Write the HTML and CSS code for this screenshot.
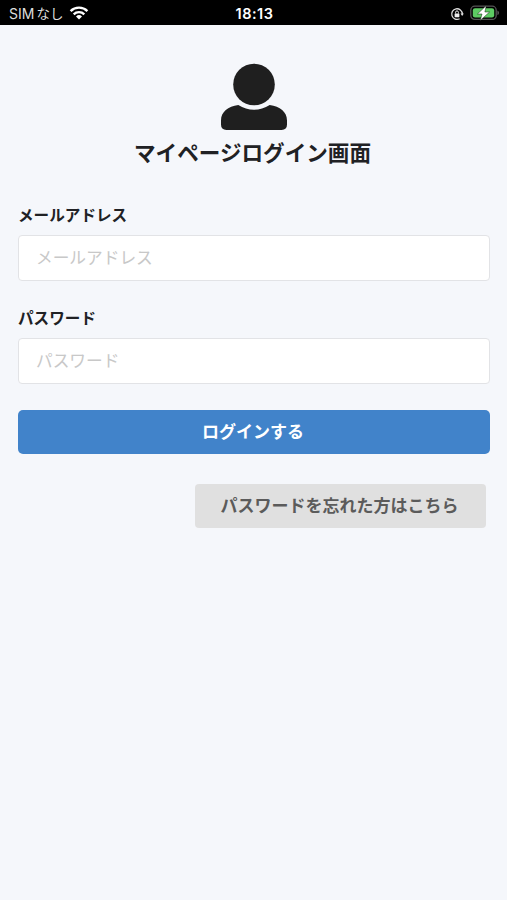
FILE: index.html
```html
<!DOCTYPE html>
<html lang="ja">
<head>
<meta charset="utf-8">
<meta name="viewport" content="width=device-width, initial-scale=1">
<title>マイページログイン画面</title>
<link rel="stylesheet" href="styles.css">
</head>
<body>
<header class="status">
  <div class="status-left">
    <span class="carrier">SIM<span class="carrier-kana">なし</span></span>
    <svg class="wifi" viewBox="0 0 20 15" width="20" height="15" aria-hidden="true">
      <g fill="none" stroke="#fff" stroke-width="2.4">
        <path d="M1.6 6.1a12 12 0 0 1 16.8 0"/>
        <path d="M4.7 9.3a7.6 7.6 0 0 1 10.6 0"/>
      </g>
      <path fill="#fff" d="M10 14.6l-3-3.1a4.3 4.3 0 0 1 6 0z"/>
    </svg>
  </div>
  <span class="clock">18:13</span>
  <div class="status-right">
    <svg viewBox="0 0 14 14" width="14" height="14" aria-hidden="true">
      <path d="M9.6 11.7A5.3 5.3 0 1 1 12.3 7" fill="none" stroke="#ddd" stroke-width="1.3"/>
      <path d="M10.5 6.5h3.3l-1.6 2.4z" fill="#ddd"/>
      <rect x="4.6" y="6.4" width="4.8" height="3.8" rx=".6" fill="#eee"/>
      <path d="M5.6 6.5V5.3a1.4 1.4 0 0 1 2.8 0v1.2" fill="none" stroke="#eee" stroke-width="1"/>
    </svg>
    <svg class="battery" viewBox="0 0 30 16" width="30" height="16" aria-hidden="true">
      <rect x=".8" y="1.2" width="25.4" height="13.2" rx="4" fill="none" stroke="#555" stroke-width="1.3"/>
      <rect x="2.8" y="3.2" width="21.4" height="9.2" rx="2.2" fill="#5dcb63"/>
      <path d="M27.4 5.5c2.2.8 2.2 3.8 0 4.6z" fill="#555"/>
      <path d="M16.3.6L7.4 9h4.6l-1.8 6.4L19.6 7h-4.7z" fill="#fff" stroke="#10240f" stroke-width=".5"/>
    </svg>
  </div>
</header>
<main class="page">
  <svg class="avatar" viewBox="0 0 68 68" width="68" height="68" aria-hidden="true">
    <circle cx="34" cy="21.5" r="20.8" fill="#1f1f1f"/>
    <path fill="#1f1f1f" d="M18.3 42.1C8 43.2 1 49.2 1 57.4v4.2Q1 67 6.4 67h55.2Q67 67 67 61.6v-4.2c0-8.2-7-14.2-17.3-15.3C40 48.4 28 48.4 18.3 42.1z"/>
  </svg>
  <h1 class="title">マイページログイン画面</h1>
  <form class="form">
    <label class="label" for="mail">メールアドレス</label>
    <input class="field" id="mail" type="email" placeholder="メールアドレス">
    <label class="label" for="pass">パスワード</label>
    <input class="field" id="pass" type="password" placeholder="パスワード">
    <button class="login" type="button">ログインする</button>
    <button class="forgot" type="button">パスワードを忘れた方はこちら</button>
  </form>
</main>
</body>
</html>
```
FILE: styles.css
```css
* {
  box-sizing: border-box;
}

body {
  margin: 0;
  min-height: 900px;
  background: #f5f7fb;
  color: #202124;
  font-family: Inter, "Noto Sans CJK JP", sans-serif;
}

.status {
  display: grid;
  grid-template-columns: 1fr auto 1fr;
  align-items: center;
  height: 25px;
  padding: 2px 7px 0 9px;
  background: #000;
  color: #fff;
}

.status-left,
.status-right {
  display: flex;
  align-items: center;
}

.status-left {
  gap: 6px;
}

.status-right {
  justify-content: flex-end;
  gap: 6px;
}

.carrier {
  color: #ddd;
  font-size: 14px;
  line-height: 20px;
  white-space: nowrap;
}

.carrier-kana {
  margin-left: 2px;
  font-size: 13.5px;
}

.wifi,
.battery {
  margin-top: -2px;
}

.clock {
  font-size: 14.5px;
  font-weight: 600;
  line-height: 20px;
  letter-spacing: 0.5px;
}

.page {
  display: flex;
  flex-direction: column;
  align-items: center;
  padding: 38px 17px 0 18px;
}

.avatar {
  display: block;
}

.title {
  margin: 6px 3px 0 0;
  font-size: 21.6px;
  font-weight: 700;
  line-height: 32px;
}

.form {
  display: flex;
  flex-direction: column;
  width: 100%;
  margin-top: 35px;
}

.label {
  margin-bottom: 7px;
  font-size: 15.6px;
  font-weight: 700;
  line-height: 24px;
}

.field {
  width: 100%;
  height: 46px;
  margin: 0 0 26px;
  padding: 0 17px;
  border: 1px solid #e2e3e6;
  border-radius: 4px;
  background: #fff;
  font-family: inherit;
  font-size: 16.7px;
}

.field::placeholder {
  color: #c8c8c8;
}

.login,
.forgot {
  height: 44px;
  padding: 0 2px 4px 0;
  border: 0;
  border-radius: 5px;
  font-family: inherit;
  font-size: 17px;
  font-weight: 700;
}

.login {
  background: #4183ca;
  color: #fff;
}

.forgot {
  align-self: flex-end;
  width: 291px;
  margin: 30px 4px 0 0;
  border-radius: 4px;
  background: #e0e0e0;
  color: #5b5b5b;
}
```
